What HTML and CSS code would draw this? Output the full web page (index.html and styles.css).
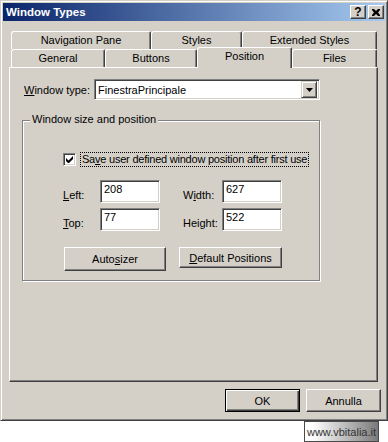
FILE: index.html
```html
<!DOCTYPE html>
<html>
<head>
    <title>Window Types</title>
    <link rel="stylesheet" href="styles.css">
</head>
<body>
    <div class="window">
        <!-- Caption bar -->
        <div class="titlebar">
            <span class="title">Window Types</span>
            <div class="caption-buttons">
                <div class="cap-btn">?</div>
                <div class="cap-btn">
                    <svg width="8" height="7" viewBox="0 0 8 7"><path d="M0 0h2l2 2 2-2h2v1L6 3.5 8 6v1H6L4 5 2 7H0V6l2-2.5L0 1z" fill="#000"/></svg>
                </div>
            </div>
        </div>

        <!-- Tab strip, two rows -->
        <div class="tabs">
            <div class="tab-row">
                <div class="tab tab-nav">Navigation Pane</div>
                <div class="tab tab-styles">Styles</div>
                <div class="tab tab-ext">Extended Styles</div>
            </div>
            <div class="tab-row">
                <div class="tab tab-general">General</div>
                <div class="tab tab-buttons">Buttons</div>
                <div class="tab tab-position active">Position</div>
                <div class="tab tab-files">Files</div>
            </div>
        </div>

        <div class="panel">
            <div class="type-row">
                <label class="type-label"><u>W</u>indow type:</label>
                <div class="combo">
                    <span class="combo-text">FinestraPrincipale</span>
                    <div class="combo-btn">
                        <svg width="7" height="4" viewBox="0 0 7 4"><path d="M0 0h7L3.5 4z" fill="#000"/></svg>
                    </div>
                </div>
            </div>

            <div class="group">
                <div class="group-label">Window size and position</div>

                <div class="check-row">
                    <div class="checkbox">
                        <svg width="7" height="7" viewBox="0 0 7 7"><path d="M0 2v3l2 2h1l4-4V0L2.5 4.5z" fill="#000"/></svg>
                    </div>
                    <span class="check-label">Sa<u>v</u>e user defined window position after first use</span>
                </div>

                <div class="fields">
                    <label class="field-label"><u>L</u>eft:</label>
                    <div class="textbox">208</div>
                    <span></span>
                    <label class="field-label">W<u>i</u>dth:</label>
                    <div class="textbox">627</div>

                    <label class="field-label"><u>T</u>op:</label>
                    <div class="textbox">77</div>
                    <span></span>
                    <label class="field-label">Height:</label>
                    <div class="textbox">522</div>
                </div>

                <div class="actions">
                    <div class="button btn-autosizer">Auto<u>s</u>izer</div>
                    <div class="button btn-default-pos"><u>D</u>efault Positions</div>
                </div>
            </div>
        </div>

        <div class="footer">
            <div class="button dialog-btn default">OK</div>
            <div class="button dialog-btn">Annulla</div>
        </div>
    </div>

    <div class="credit">www.vbitalia.it</div>
</body>
</html>
```

FILE: styles.css
```css
* {
    box-sizing: border-box;
}

body {
    margin: 0;
    background-color: #fff;
    font-family: "Liberation Sans", Arial, sans-serif;
    font-size: 11px;
    color: #000;
    white-space: nowrap;
}

u {
    text-decoration: underline;
    text-underline-offset: 1px;
}

/* Outer window frame (Win2000 look) */
.window {
    width: 388px;
    height: 421px;
    background: #d4d0c8;
    border: 1px solid;
    border-color: #d4d0c8 #404040 #404040 #d4d0c8;
    box-shadow: inset 1px 1px #fff, inset -1px -1px #808080;
    padding: 2px;
    display: flex;
    flex-direction: column;
}

.titlebar {
    height: 18px;
    background: linear-gradient(to right, #0a246a, #a6caf0);
    display: flex;
    align-items: center;
    justify-content: space-between;
    padding: 0 1px 0 3px;
}

.title {
    color: #fff;
    font-weight: bold;
    font-size: 11.5px;
}

.caption-buttons {
    display: flex;
    gap: 2px;
}

.cap-btn {
    width: 16px;
    height: 14px;
    background: #d4d0c8;
    border: 1px solid;
    border-color: #fff #404040 #404040 #fff;
    box-shadow: inset -1px -1px #808080;
    display: flex;
    align-items: center;
    justify-content: center;
    font-weight: bold;
    font-size: 12px;
    line-height: 1;
}

/* Tabs */
.tabs {
    margin: 10px 0 0 8px;
    width: 366px;
    position: relative;
    z-index: 1;
}

.tab-row {
    display: flex;
    height: 18px;
}

.tab {
    height: 18px;
    background: #d4d0c8;
    border-top: 1px solid #fff;
    border-left: 1px solid #fff;
    border-right: 1px solid #404040;
    box-shadow: inset -1px 0 #808080;
    border-radius: 3px 2px 0 0;
    display: flex;
    align-items: center;
    justify-content: center;
    padding-bottom: 1px;
}

.tab-nav { width: 140px; }
.tab-styles { width: 91px; }
.tab-ext { width: 135px; }
.tab-general { width: 94px; }
.tab-buttons { width: 92px; }
.tab-position { width: 95px; }
.tab-files { width: 85px; }

.tab.active {
    height: 21px;
    margin-top: -2px;
    padding-bottom: 4px;
}

/* Tab page */
.panel {
    margin-left: 6px;
    width: 369px;
    height: 315px;
    border: 1px solid;
    border-color: #fff #404040 #404040 #fff;
    box-shadow: inset -1px -1px #808080;
    padding: 11px 0 0 14px;
}

.type-row {
    display: flex;
    align-items: center;
}

.type-label {
    width: 70px;
}

.combo,
.textbox,
.checkbox {
    background: #fff;
    border: 1px solid;
    border-color: #808080 #fff #fff #808080;
    box-shadow: inset 1px 1px #404040, inset -1px -1px #d4d0c8;
}

.combo {
    width: 226px;
    height: 21px;
    display: flex;
    align-items: center;
    justify-content: space-between;
    padding: 0 2px 0 3px;
}

.combo-btn {
    width: 16px;
    height: 17px;
    background: #d4d0c8;
    border: 1px solid;
    border-color: #d4d0c8 #404040 #404040 #d4d0c8;
    box-shadow: inset 1px 1px #fff, inset -1px -1px #808080;
    display: flex;
    align-items: center;
    justify-content: center;
}

/* Group box */
.group {
    position: relative;
    margin: 20px 0 0 -2px;
    width: 298px;
    height: 161px;
    border: 1px solid #808080;
    box-shadow: inset 1px 1px #fff, 1px 1px #fff;
    padding: 31px 0 0 40px;
}

.group-label {
    position: absolute;
    top: -8px;
    left: 7px;
    padding: 0 2px;
    background: #d4d0c8;
}

.check-row {
    display: flex;
    align-items: center;
    gap: 4px;
}

.checkbox {
    width: 13px;
    height: 13px;
    display: flex;
    align-items: center;
    justify-content: center;
}

.check-label {
    border: 1px dotted #000;
    padding: 0 1px 1px 1px;
    letter-spacing: -0.22px;
}

.fields {
    display: grid;
    grid-template-columns: 37px 60px 23px 39px 60px;
    grid-auto-rows: 23px;
    row-gap: 5px;
    margin-top: 13px;
}

.field-label {
    padding-top: 9px;
}

.textbox {
    padding: 2px 3px;
}

.actions {
    display: flex;
    align-items: flex-start;
    gap: 13px;
    margin: 16px 0 0 1px;
}

.button {
    background: #d4d0c8;
    border: 1px solid;
    border-color: #fff #404040 #404040 #fff;
    box-shadow: inset -1px -1px #808080;
    display: flex;
    align-items: center;
    justify-content: center;
}

.btn-autosizer {
    width: 102px;
    height: 24px;
}

.btn-default-pos {
    width: 103px;
    height: 21px;
}

/* OK / Annulla */
.footer {
    display: flex;
    justify-content: flex-end;
    gap: 6px;
    margin-top: 7px;
    padding-right: 4px;
}

.dialog-btn {
    width: 75px;
    height: 23px;
}

.dialog-btn.default {
    border-color: #000;
    box-shadow: inset 1px 1px #fff, inset -1px -1px #404040, inset -2px -2px #808080;
}

.credit {
    margin-left: 304px;
    width: 75px;
    height: 21px;
    border: 1px solid #4a4a4a;
    background: linear-gradient(to right, #fff 10%, #7a7a7a);
    color: #333;
    display: flex;
    align-items: center;
    justify-content: center;
}
```
